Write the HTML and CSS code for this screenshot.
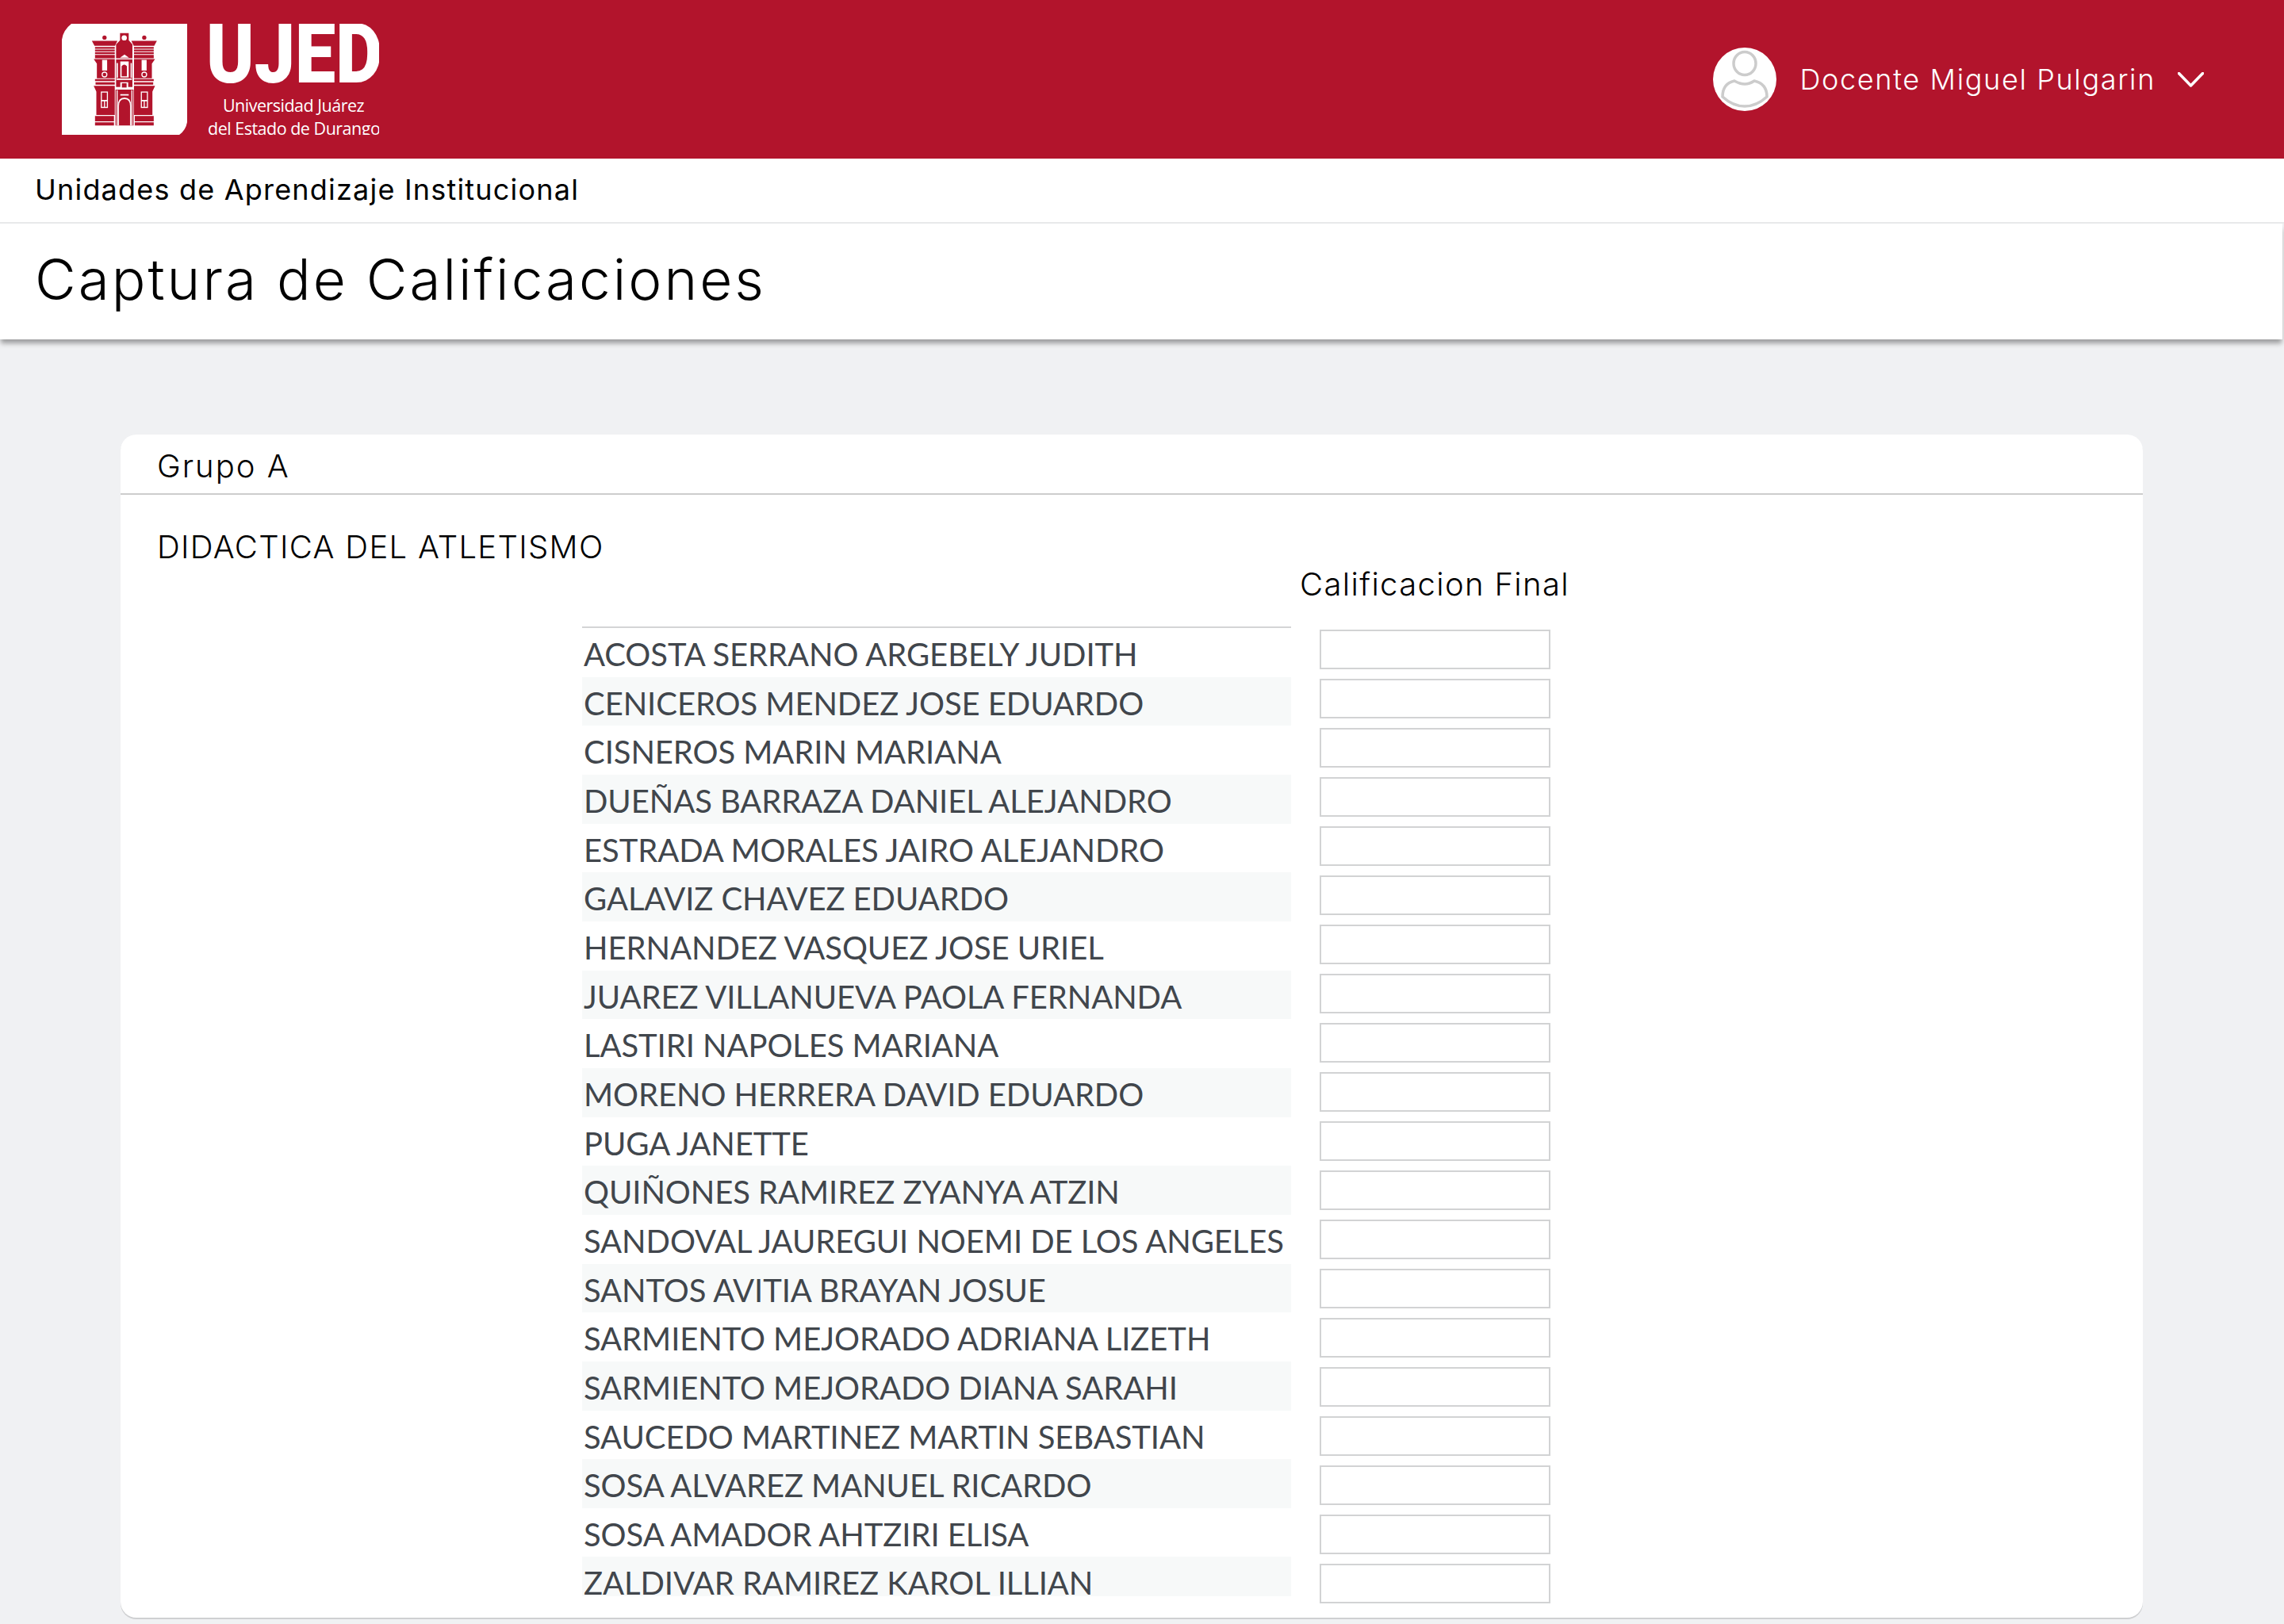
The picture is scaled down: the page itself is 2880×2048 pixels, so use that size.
FILE: index.html
```html
<!DOCTYPE html>
<html lang="es">
<head>
<meta charset="utf-8">
<title>Captura de Calificaciones</title>
<link rel="stylesheet" href="styles.css">
</head>
<body>
<header class="topbar">
  <div class="brand">
    <svg class="crest" viewBox="24 30 476 418" preserveAspectRatio="none" aria-hidden="true">
      <path class="crest-bg" d="M60 30H500V400Q495 430 470 448H24V90Q28 55 60 30Z"/>
      <defs>
        <g id="wing">
          <circle cx="186" cy="82" r="8"/>
          <path d="M138 94H235L226 113H148Z"/>
          <path d="M150 117h75v7h-75zM150 127h75v7h-75zM150 137h75v7h-75zM150 147h75v13h-75z"/>
          <path d="M145 163H225V235H157V180Z"/>
          <path class="w" d="M177 166h19v40h-19z"/>
          <circle class="w" cx="186" cy="221" r="11"/>
          <circle cx="186" cy="221" r="7"/>
          <path d="M150 238h75v8h-75zM152 250h73v9h-73z"/>
          <path d="M145 264H225V373H155V285Z"/>
          <path class="w" d="M172 285h27v62h-27z"/>
          <path d="M176 289h19v28h-19zM176 322h8v21h-8zM188 322h7v21h-7z"/>
          <path d="M150 377h72v20h-72zM150 401h72v12h-72z"/>
        </g>
      </defs>
      <use href="#wing" class="r"/>
      <use href="#wing" class="r" transform="translate(523 0) scale(-1 1)"/>
      <path class="r" d="M245 65H278V92L292 108V160H230V108L245 92Z"/>
      <circle class="w" cx="261" cy="83" r="10"/>
      <path class="w" d="M245 158L262 146L279 158Z"/>
      <path class="r" d="M230 164H292V268H230Z"/>
      <path class="w" d="M246 172h32v60h-32zM232 178h5v56h-5zM285 178h5v56h-5zM232 236h58v5h-58zM246 250h30v24h-30z"/>
      <path class="r" d="M251 190Q261 178 271 190V228H251Z"/>
      <path class="r" d="M252 254h18v16h-18z"/>
      <path class="r" d="M228 278H296V413H228Z"/>
      <path class="w" d="M232 280h4v133h-4zM288 280h4v133h-4zM246 295h32v5h-32z"/>
      <path class="w" d="M237 413V338Q237 308 262 308Q287 308 287 338V413H283V340Q283 314 262 314Q241 314 241 340V413Z"/>
    </svg>
    <div class="wordmark">
      <div class="wordmark-name">UJED</div>
      <div class="wordmark-sub">Universidad Juárez</div>
      <div class="wordmark-sub">del Estado de Durango</div>
    </div>
  </div>
  <div class="user">
    <svg class="avatar" viewBox="0 0 80 80" aria-hidden="true">
      <circle cx="40" cy="40" r="40" fill="#fff"/>
      <ellipse cx="40" cy="20" rx="14" ry="14.5" class="avatar-line"/>
      <path class="avatar-line" d="M12 62C12 50 18 44 27 42Q34 46 40 46Q46 46 52 42C61 44 68 50 68 62Q55 74 40 74Q25 74 12 62Z"/>
    </svg>
    <span class="user-name">Docente Miguel Pulgarin</span>
    <svg class="chevron" viewBox="0 0 33 19" aria-hidden="true"><path d="M1.5 1.5L16.5 17L31.5 1.5"/></svg>
  </div>
</header>
<div class="crumb">Unidades de Aprendizaje Institucional</div>
<div class="title-bar"><h1 class="title">Captura de Calificaciones</h1></div>
<main class="content">
  <section class="card">
    <div class="card-head">Grupo A</div>
    <div class="card-body">
      <div class="subject">DIDACTICA DEL ATLETISMO</div>
      <div class="grades">
        <div class="names-col">
          <div class="name">ACOSTA SERRANO ARGEBELY JUDITH</div>
          <div class="name">CENICEROS MENDEZ JOSE EDUARDO</div>
          <div class="name">CISNEROS MARIN MARIANA</div>
          <div class="name">DUEÑAS BARRAZA DANIEL ALEJANDRO</div>
          <div class="name">ESTRADA MORALES JAIRO ALEJANDRO</div>
          <div class="name">GALAVIZ CHAVEZ EDUARDO</div>
          <div class="name">HERNANDEZ VASQUEZ JOSE URIEL</div>
          <div class="name">JUAREZ VILLANUEVA PAOLA FERNANDA</div>
          <div class="name">LASTIRI NAPOLES MARIANA</div>
          <div class="name">MORENO HERRERA DAVID EDUARDO</div>
          <div class="name">PUGA JANETTE</div>
          <div class="name">QUIÑONES RAMIREZ ZYANYA ATZIN</div>
          <div class="name">SANDOVAL JAUREGUI NOEMI DE LOS ANGELES</div>
          <div class="name">SANTOS AVITIA BRAYAN JOSUE</div>
          <div class="name">SARMIENTO MEJORADO ADRIANA LIZETH</div>
          <div class="name">SARMIENTO MEJORADO DIANA SARAHI</div>
          <div class="name">SAUCEDO MARTINEZ MARTIN SEBASTIAN</div>
          <div class="name">SOSA ALVAREZ MANUEL RICARDO</div>
          <div class="name">SOSA AMADOR AHTZIRI ELISA</div>
          <div class="name">ZALDIVAR RAMIREZ KAROL ILLIAN</div>
        </div>
        <div class="inputs-col">
          <div class="inputs-head">Calificacion Final</div>
          <input class="grade" type="text"><input class="grade" type="text"><input class="grade" type="text"><input class="grade" type="text"><input class="grade" type="text">
          <input class="grade" type="text"><input class="grade" type="text"><input class="grade" type="text"><input class="grade" type="text"><input class="grade" type="text">
          <input class="grade" type="text"><input class="grade" type="text"><input class="grade" type="text"><input class="grade" type="text"><input class="grade" type="text">
          <input class="grade" type="text"><input class="grade" type="text"><input class="grade" type="text"><input class="grade" type="text"><input class="grade" type="text">
        </div>
      </div>
    </div>
  </section>
</main>
</body>
</html>
```

FILE: styles.css
```css
* { box-sizing: border-box; }
html, body { margin: 0; height: 100%; }
body {
  background: #f0f1f3;
  color: #000;
  font-family: Inter, "Open Sans", sans-serif;
  overflow: hidden;
}
.topbar {
  height: 200px;
  background: #b2142c;
  display: flex;
  justify-content: space-between;
  align-items: center;
  padding: 0 101px 0 78px;
}
.brand { display: flex; gap: 26px; height: 140px; }
.crest { width: 158px; height: 140px; display: block; }
.crest-bg, .w { fill: #fff; }
.r, #wing { fill: #b2142c; }
#wing .w { fill: #fff; }
.wordmark {
  width: 216px;
  height: 140px;
  overflow: hidden;
  color: #fff;
  text-align: center;
  font-family: "Open Sans", sans-serif;
}
.wordmark-name {
  font-family: Roboto, sans-serif;
  font-weight: 900;
  font-size: 105px;
  line-height: 78px;
  height: 88px;
  margin-left: -2px;
  text-align: left;
  white-space: nowrap;
  transform: scaleX(0.87);
  transform-origin: 0 50%;
}
.wordmark-sub {
  font-size: 21.5px;
  line-height: 29px;
  letter-spacing: -0.5px;
  white-space: nowrap;
}
.user { display: flex; align-items: center; color: #fff; }
.avatar { width: 80px; height: 80px; display: block; }
.avatar-line { fill: none; stroke: #ccc; stroke-width: 3.5; }
.user-name {
  margin-left: 30px;
  font-weight: 300;
  font-size: 36px;
  letter-spacing: 1.65px;
  white-space: nowrap;
}
.chevron {
  width: 33px;
  height: 19px;
  margin-left: 28px;
  fill: none;
  stroke: #fff;
  stroke-width: 3.5;
  stroke-linecap: round;
  stroke-linejoin: round;
}
.crumb {
  height: 82px;
  background: #fff;
  border-bottom: 2px solid #e8e9ea;
  padding: 0 44px;
  font-size: 36px;
  letter-spacing: 1.2px;
  line-height: 78px;
  white-space: nowrap;
}
.title-bar {
  width: 2878px;
  height: 146px;
  background: #fff;
  padding: 0 44px;
  box-shadow: 0 6px 6px -1px rgba(0, 0, 0, 0.35);
  position: relative;
}
.title {
  margin: 0;
  font-weight: 300;
  font-size: 71px;
  letter-spacing: 3px;
  line-height: 140px;
  white-space: nowrap;
}
.content { padding: 120px 178px 0 152px; }
.card {
  background: #fff;
  border-radius: 20px;
  box-shadow: 0 2px 0 #cfd0d2;
  height: 1492px;
}
.card-head {
  height: 76px;
  border-bottom: 2px solid #cdcdcd;
  padding-left: 46px;
  font-size: 40px;
  font-weight: 300;
  letter-spacing: 2px;
  line-height: 80px;
}
.card-body { padding: 0 46px; }
.subject {
  height: 166px;
  padding-top: 38px;
  font-size: 40px;
  font-weight: 300;
  letter-spacing: 1.3px;
  line-height: 56px;
  white-space: nowrap;
}
.grades {
  display: grid;
  grid-template-columns: 894px 362px;
  margin-left: 536px;
}
.names-col {
  border-top: 2px solid #d4d5d6;
}
.name {
  height: 61.67px;
  padding: 3px 0 0 2px;
  font-family: Lato, sans-serif;
  font-size: 40px;
  letter-spacing: -0.08px;
  line-height: 60px;
  color: #41464c;
  white-space: nowrap;
}
.name:nth-child(even) { background: #f7f9f9; }
.name:last-child { height: 50px; }
.inputs-col {
  display: flex;
  flex-direction: column;
  align-items: center;
  margin-top: 4px;
}
.inputs-head {
  margin-top: -106px;
  height: 106px;
  font-size: 40px;
  font-weight: 300;
  letter-spacing: 1.35px;
  line-height: 98px;
  white-space: nowrap;
}
.grade {
  display: block;
  width: 291px;
  height: 50px;
  margin: 0 0 12px;
  padding: 0 8px;
  border: 2px solid #d2d3d4;
  background: #fff;
  border-radius: 0;
  flex: none;
}
```
